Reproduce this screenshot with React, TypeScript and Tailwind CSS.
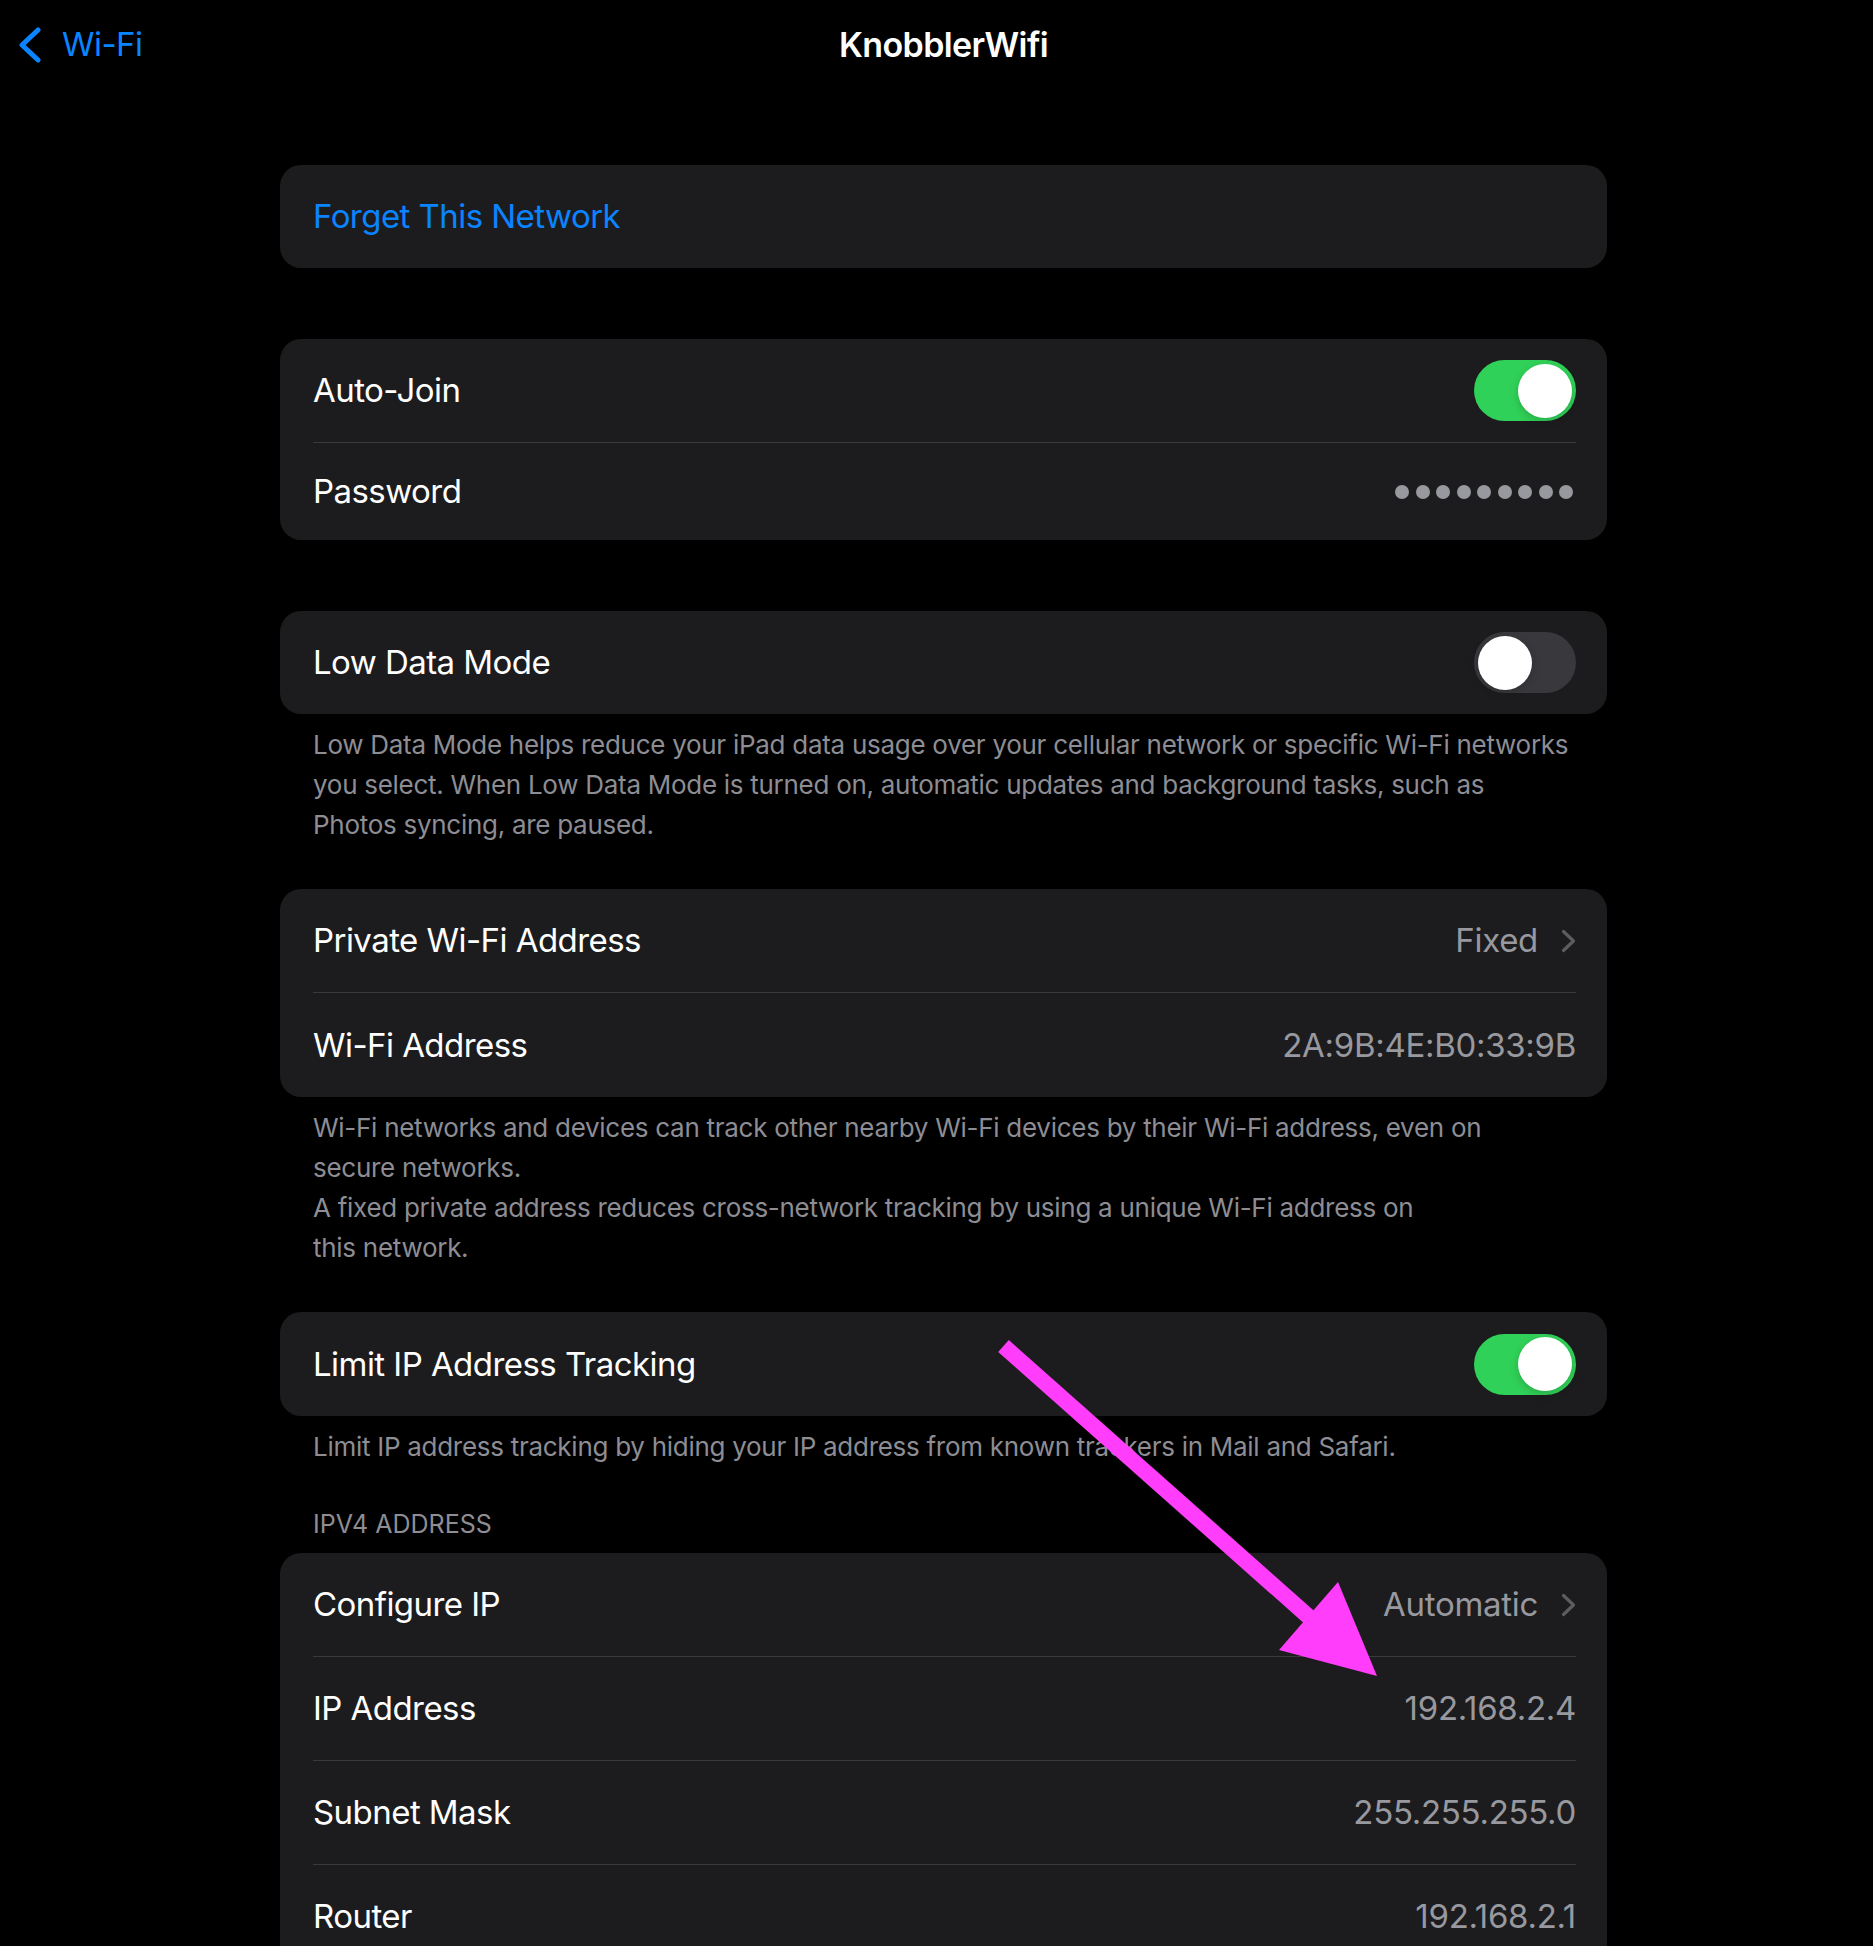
import clsx from "clsx";
import { ReactNode } from "react";

function Toggle({ on }: { on: boolean }) {
  return (
    <div
      className={clsx(
        "flex h-[61px] w-[102px] items-center rounded-full px-[4px]",
        on ? "justify-end bg-[#30d158]" : "justify-start bg-[#39393d]"
      )}
    >
      <div className="h-[54px] w-[54px] rounded-full bg-white shadow-[0_3px_8px_rgba(0,0,0,0.18)]" />
    </div>
  );
}

function Disclosure() {
  return (
    <svg width="15" height="24" viewBox="0 0 15 24" fill="none">
      <polyline
        points="2.5,2.5 12.5,12 2.5,21.5"
        stroke="#5c5c61"
        strokeWidth="3.2"
        strokeLinecap="round"
        strokeLinejoin="round"
      />
    </svg>
  );
}

function Row({
  label,
  children,
  first,
  height = "h-[104px]",
}: {
  label: string;
  children?: ReactNode;
  first?: boolean;
  height?: string;
}) {
  return (
    <div
      className={clsx(
        "flex items-center justify-between",
        height,
        !first && "border-t border-[#3a3a3c]"
      )}
    >
      <span className="text-[33px] leading-none tracking-[-0.55px] text-white">{label}</span>
      {children}
    </div>
  );
}

function Value({ children }: { children: ReactNode }) {
  return <span className="text-[33px] leading-none tracking-[-0.3px] text-[#98989f]">{children}</span>;
}

function Card({ children }: { children: ReactNode }) {
  return <div className="rounded-[21px] bg-[#1c1c1e] pl-[33px] pr-[31px]">{children}</div>;
}

function Footer({ lines }: { lines: string[] }) {
  return (
    <div className="whitespace-nowrap pl-[33px] pt-[11px] text-[26px] leading-[40px] tracking-[-0.28px] text-[#8d8d93]">
      {lines.map((line) => (
        <div key={line}>{line}</div>
      ))}
    </div>
  );
}

export default function App() {
  return (
    <div className="relative h-[1946px] w-full overflow-hidden bg-black font-['Inter',sans-serif]">
      {/* nav bar */}
      <div className="grid h-[89px] grid-cols-[280px_1327px_1fr] items-center">
        <div className="flex items-center gap-[21px] pl-[18px] text-[#0a84ff]">
          <svg width="23" height="36" viewBox="0 0 23 36" fill="none">
            <polyline
              points="20,3 4,18 20,33"
              stroke="#0a84ff"
              strokeWidth="5"
              strokeLinecap="round"
              strokeLinejoin="round"
            />
          </svg>
          <span className="text-[33px] leading-none tracking-[-0.55px]">Wi-Fi</span>
        </div>
        <div className="text-center text-[34px] font-semibold leading-none tracking-[-0.6px] text-white">
          KnobblerWifi
        </div>
      </div>

      <main className="ml-[280px] w-[1327px] pt-[76px]">
        <Card>
          <div className="flex h-[103px] items-center">
            <span className="text-[33px] leading-none tracking-[-0.55px] text-[#0a84ff]">
              Forget This Network
            </span>
          </div>
        </Card>

        <div className="mt-[71px]">
          <Card>
            <Row label="Auto-Join" first height="h-[103px]">
              <Toggle on />
            </Row>
            <Row label="Password" height="h-[98px]">
              <div className="mr-[3px] flex gap-[6.5px]">
                {Array.from({ length: 9 }).map((_, i) => (
                  <span key={i} className="h-[14px] w-[14px] rounded-full bg-[#98989f]" />
                ))}
              </div>
            </Row>
          </Card>
        </div>

        <div className="mt-[71px]">
          <Card>
            <Row label="Low Data Mode" first height="h-[103px]">
              <Toggle on={false} />
            </Row>
          </Card>
          <Footer
            lines={[
              "Low Data Mode helps reduce your iPad data usage over your cellular network or specific Wi-Fi networks",
              "you select. When Low Data Mode is turned on, automatic updates and background tasks, such as",
              "Photos syncing, are paused.",
            ]}
          />
        </div>

        <div className="mt-[44px]">
          <Card>
            <Row label="Private Wi-Fi Address" first height="h-[103px]">
              <div className="flex items-center gap-[23px]">
                <Value>Fixed</Value>
                <Disclosure />
              </div>
            </Row>
            <Row label="Wi-Fi Address" height="h-[105px]">
              <Value>2A:9B:4E:B0:33:9B</Value>
            </Row>
          </Card>
          <Footer
            lines={[
              "Wi-Fi networks and devices can track other nearby Wi-Fi devices by their Wi-Fi address, even on",
              "secure networks.",
              "A fixed private address reduces cross-network tracking by using a unique Wi-Fi address on",
              "this network.",
            ]}
          />
        </div>

        <div className="mt-[44px]">
          <Card>
            <Row label="Limit IP Address Tracking" first height="h-[104px]">
              <Toggle on />
            </Row>
          </Card>
          <Footer lines={["Limit IP address tracking by hiding your IP address from known trackers in Mail and Safari."]} />
        </div>

        <div className="mt-[42px] pb-[14px] pl-[33px] text-[25px] leading-[30px] text-[#8d8d93]">IPV4 ADDRESS</div>

        <Card>
          <Row label="Configure IP" first height="h-[103px]">
            <div className="flex items-center gap-[23px]">
              <Value>Automatic</Value>
              <Disclosure />
            </div>
          </Row>
          <Row label="IP Address">
            <Value>192.168.2.4</Value>
          </Row>
          <Row label="Subnet Mask">
            <Value>255.255.255.0</Value>
          </Row>
          <Row label="Router">
            <Value>192.168.2.1</Value>
          </Row>
        </Card>
      </main>

      {/* annotation arrow */}
      <svg
        className="pointer-events-none absolute left-0 top-0"
        width="1873"
        height="1946"
        viewBox="0 0 1873 1946"
      >
        <line x1="1003.5" y1="1346" x2="1318" y2="1625" stroke="#ff3dfb" strokeWidth="16" />
        <polygon points="1279,1650 1338,1582 1377,1676" fill="#ff3dfb" />
      </svg>
    </div>
  );
}
